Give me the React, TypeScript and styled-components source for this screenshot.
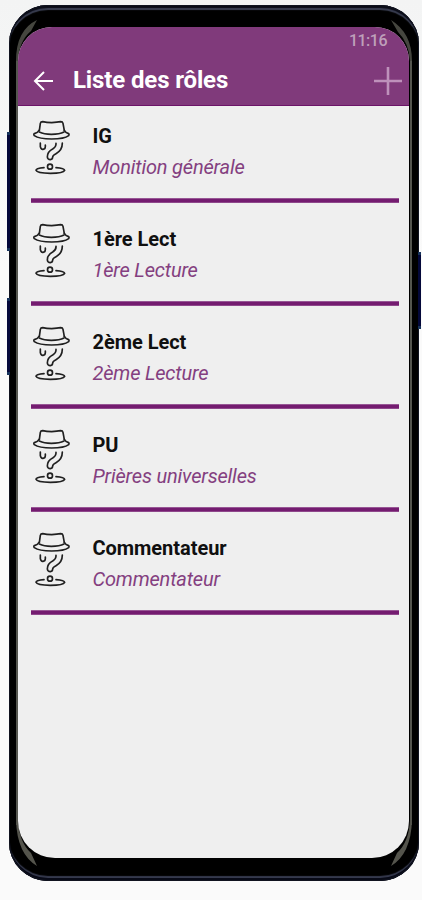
import React from "react";
import styled, { createGlobalStyle } from "styled-components";

const GlobalStyle = createGlobalStyle`
  * { box-sizing: border-box; }
  body { margin: 0; background: linear-gradient(#f3f4f4, #fafafa 30%, #fafafa); font-family: Roboto, sans-serif; }
`;

const Stage = styled.main`
  width: 422px;
  height: 900px;
  padding: 5px 3px 0 9px;
  overflow: hidden;
`;

const Phone = styled.div`
  position: relative;
  width: 410px;
  height: 876px;
  padding: 22px 10px 23px 9px;
  border-radius: 39px;
  background: #000;
  box-shadow: inset 0 0 0 1px #10131f, inset 0 4px 1px -1px #090b16, inset 0 6px 1px -1px #3c4155,
    inset 0 -3px 0 0 #080a17, inset 0 -6px 1px -1px #35394d;
`;

const SideKey = styled.i<{ $side: "left" | "right"; $top: number; $height: number }>`
  position: absolute;
  top: ${(p) => p.$top}px;
  ${(p) => p.$side}: -2px;
  width: 3px;
  height: ${(p) => p.$height}px;
  border: solid #17335b;
  border-width: 3px 0;
  background: #04083a;
`;

const Gloss = styled.svg`
  position: absolute;
  inset: 0;
  width: 410px;
  height: 876px;
`;

const Screen = styled.section`
  position: relative;
  height: 831px;
  border-radius: 34px 34px 37px 37px;
  overflow: hidden;
  background: #efefef;
`;

const Header = styled.header`
  height: 79px;
  background: #803a7b;
  border-bottom: 1px solid #6c1468;
`;

const StatusBar = styled.div`
  display: flex;
  justify-content: flex-end;
  height: 27px;
  padding: 3px 22px 0 0;
  color: #bea0ba;
  font-size: 16px;
  font-weight: 500;
  line-height: 21px;
  letter-spacing: -0.5px;
`;

const Toolbar = styled.div`
  display: flex;
  align-items: center;
  height: 52px;
  padding: 1px 7px 0 14px;
`;

const Title = styled.h1`
  flex: 1;
  margin: -1px 0 0 18px;
  color: #fff;
  font-size: 24px;
  font-weight: 700;
  line-height: 32px;
  letter-spacing: -0.13px;
  white-space: nowrap;
`;

const ToolIcon = styled.svg`
  display: block;
  flex: none;
`;

const List = styled.ul`
  margin: 0;
  padding: 0 10px 0 13px;
  list-style: none;
`;

const Row = styled.li`
  display: flex;
  height: 103px;
  padding-top: 12px;
  background: linear-gradient(#a973a7, #741c70 1.5px, #741c70 4px, #a973a7) 0 92px / 100% 5px no-repeat;
`;

const RoleIcon = styled.svg`
  flex: none;
  width: 44px;
  height: 60px;
  margin-left: -1px;
`;

const RoleText = styled.div`
  margin: 2px 0 0 18.5px;
`;

const RoleName = styled.div`
  color: #101010;
  font-size: 20px;
  font-weight: 700;
  line-height: 32px;
  letter-spacing: -0.04px;
  white-space: nowrap;
`;

const RoleDetail = styled(RoleName)`
  margin-top: -1px;
  color: #843f80;
  font-weight: 400;
  font-style: italic;
  letter-spacing: -0.18px;
`;

const roles = [
  ["IG", "Monition générale"],
  ["1ère Lect", "1ère Lecture"],
  ["2ème Lect", "2ème Lecture"],
  ["PU", "Prières universelles"],
  ["Commentateur", "Commentateur"],
];

function MysteryFigure() {
  return (
    <RoleIcon viewBox="30 24 132 180" fill="none" stroke="#202020" strokeWidth="5" strokeLinecap="round" strokeLinejoin="round">
      <path d="M58 62 L61 40 Q62 35 68 35 Q80 38 95 38 Q112 37 122 35 Q128 35 129 40 L133 62" />
      <path d="M57 61 Q53 68 45 70 Q39 72 43 77 Q57 87 95 87 Q133 87 146 77 Q149 72 144 70 Q137 68 133 61" />
      <path d="M58 66 Q72 73 94 73 Q119 73 132 66" />
      <path d="M61 99 V110 Q63 119 69 118 Q76 117 76 110 V105" />
      <path d="M108 100 Q109 110 98 117 Q82 125 82 141 Q83 149 91 149 Q98 148 98 141 Q98 136 108 131 Q127 121 127 99" />
      <circle cx="90" cy="170" r="7.5" />
      <path d="M72 173 Q48 175 48 181 Q51 190 91 190 Q130 190 134 181 Q133 175 108 173" />
    </RoleIcon>
  );
}

export default function App() {
  return (
    <>
      <GlobalStyle />
      <Stage>
        <Phone>
          <SideKey $side="left" $top={127} $height={119} />
          <SideKey $side="left" $top={293} $height={77} />
          <SideKey $side="right" $top={247} $height={77} />
          <Gloss viewBox="0 0 410 876" fill="none">
            <path d="M8 55 V820 M402 55 V820" stroke="#55564f" strokeWidth="2" />
            <path d="M7 56 Q7 25 28 15 L22 26 Q10 36 9 56Z M403 56 Q403 28 382 15 L389 27 Q400 38 401 56Z" fill="#45463f" />
            <path d="M7 815 Q8 849 28 861 L22 848 Q10 837 9 815Z M403 815 Q402 849 382 861 L388 848 Q400 837 401 815Z" fill="#54544c" />
          </Gloss>
          <Screen>
            <Header>
              <StatusBar>11:16</StatusBar>
              <Toolbar>
                <ToolIcon width="23" height="22" viewBox="0 0 23 22" fill="none" stroke="#fff" strokeWidth="2">
                  <path d="M21 11 H3 M12 2 L3 11 L12 20" />
                </ToolIcon>
                <Title>Liste des rôles</Title>
                <ToolIcon width="28" height="28" viewBox="0 0 28 28" fill="none" stroke="#be91bb" strokeWidth="2.6">
                  <path d="M0 14 H28 M14 0 V28" />
                </ToolIcon>
              </Toolbar>
            </Header>
            <List>
              {roles.map(([name, detail]) => (
                <Row key={name}>
                  <MysteryFigure />
                  <RoleText>
                    <RoleName>{name}</RoleName>
                    <RoleDetail>{detail}</RoleDetail>
                  </RoleText>
                </Row>
              ))}
            </List>
          </Screen>
        </Phone>
      </Stage>
    </>
  );
}
